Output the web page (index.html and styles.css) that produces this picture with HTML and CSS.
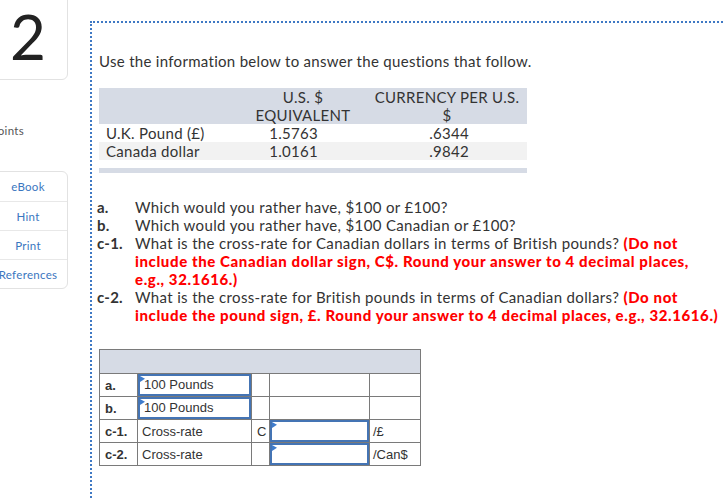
FILE: index.html
```html
<!DOCTYPE html>
<html>
<head>
<meta charset="utf-8">
<link rel="stylesheet" href="styles.css">
</head>
<body>
<div class="page">
  <aside class="side">
    <div class="numcard"><span class="num">2</span></div>
    <div class="points">points</div>
    <div class="tools">
      <div class="tool">eBook</div>
      <div class="tool">Hint</div>
      <div class="tool">Print</div>
      <div class="tool">References</div>
    </div>
  </aside>
  <main class="question">
    <p class="intro">Use the information below to answer the questions that follow.</p>
    <div class="rates">
      <div class="rh c1"></div>
      <div class="rh c2">U.S. $<br>EQUIVALENT</div>
      <div class="rh c3">CURRENCY PER U.S.<br>$</div>
      <div class="rc c1">U.K. Pound (£)</div>
      <div class="rc c2">1.5763</div>
      <div class="rc c3">.6344</div>
      <div class="rc alt c1">Canada dollar</div>
      <div class="rc alt c2">1.0161</div>
      <div class="rc alt c3">.9842</div>
    </div>
    <div class="rates-bar"></div>

    <div class="parts">
      <div class="lbl">a.</div>
      <div class="txt">Which would you rather have, $100 or £100?</div>
      <div class="lbl">b.</div>
      <div class="txt">Which would you rather have, $100 Canadian or £100?</div>
      <div class="lbl">c-1.</div>
      <div class="txt">What is the cross-rate for Canadian dollars in terms of British pounds? <b class="red">(Do not<br>include the Canadian dollar sign, C$. Round your answer to 4 decimal places,<br>e.g., 32.1616.)</b></div>
      <div class="lbl">c-2.</div>
      <div class="txt">What is the cross-rate for British pounds in terms of Canadian dollars? <b class="red">(Do not<br>include the pound sign, £. Round your answer to 4 decimal places, e.g., 32.1616.)</b></div>
    </div>

    <table class="answers">
      <colgroup>
        <col class="w1"><col class="w2"><col class="w3"><col class="w4"><col class="w5">
      </colgroup>
      <tr class="head"><td colspan="5"></td></tr>
      <tr>
        <td class="k">a.</td>
        <td class="in"><div class="box"><span class="flag"></span>100 Pounds</div></td>
        <td></td><td></td><td></td>
      </tr>
      <tr>
        <td class="k">b.</td>
        <td class="in"><div class="box"><span class="flag"></span>100 Pounds</div></td>
        <td></td><td></td><td></td>
      </tr>
      <tr>
        <td class="k">c-1.</td>
        <td>Cross-rate</td>
        <td class="cc">C</td>
        <td class="in"><div class="box"><span class="flag"></span></div></td>
        <td class="unit">/£</td>
      </tr>
      <tr>
        <td class="k">c-2.</td>
        <td>Cross-rate</td>
        <td></td>
        <td class="in"><div class="box"><span class="flag"></span></div></td>
        <td class="unit">/Can$</td>
      </tr>
    </table>
  </main>
</div>
</body>
</html>
```

FILE: styles.css
```css
* { box-sizing: border-box; }
html, body { margin: 0; padding: 0; background: #fff; }
body {
  font-family: Lato, "Open Sans", sans-serif;
  color: #333;
  overflow: hidden;
  width: 723px;
  height: 499px;
}
.page { display: flex; align-items: flex-start; height: 499px; }

.side { flex: none; width: 68px; }
.numcard {
  margin-left: -12px;
  margin-top: -10px;
  width: 80px;
  height: 90px;
  border: 1px solid #e2e2e2;
  border-radius: 6px;
  display: flex;
  align-items: center;
  justify-content: center;
}
.num {
  font-size: 62px;
  line-height: 1;
  color: #222;
  font-weight: 400;
  margin-top: 2px;
}
.points {
  margin-top: 44px;
  margin-left: -9px;
  font-size: 11.5px;
  letter-spacing: 0.3px;
  color: #555;
  line-height: 14px;
}
.tools {
  margin-top: 33px;
  margin-left: -12px;
  width: 80px;
  border: 1px solid #e2e2e2;
  border-radius: 6px;
}
.tool {
  height: 29px;
  display: flex;
  align-items: center;
  justify-content: center;
  font-size: 11.5px;
  letter-spacing: 0.3px;
  color: #3a76c0;
  border-top: 1px solid #e8e8e8;
}
.tool:first-child { border-top: 0; }

.question {
  flex: 1;
  margin-left: 22px;
  margin-top: 21px;
  height: 480px;
  border-top: 2px dotted #3f79c4;
  border-left: 2px dotted #3f79c4;
  padding: 29px 0 0 7px;
}
.intro {
  margin: 0;
  font-size: 15px;
  line-height: 18px;
  letter-spacing: 0.3px;
}

.rates {
  margin-top: 18px;
  width: 428px;
  display: grid;
  grid-template-columns: 150px 108px 170px;
  font-size: 15px;
  letter-spacing: 0.3px;
}
.rh {
  background: #d6dbe5;
  line-height: 17.5px;
  height: 36px;
  padding-top: 1px;
  text-align: center;
}
.rh.c3 { padding-left: 10px; }
.rc { line-height: 18px; height: 18px; }
.rc.alt { background: #f2f2f2; }
.rc.c1 { padding-left: 7px; }
.rc.c2 { text-align: right; padding-right: 39px; }
.rc.c3 { text-align: right; padding-right: 58px; }
.rates-bar {
  width: 428px;
  height: 5px;
  margin-top: 8px;
  background: #d6dbe5;
}

.parts {
  margin-top: 25px;
  margin-left: -2px;
  display: grid;
  grid-template-columns: 38px auto;
  font-size: 15px;
  line-height: 18px;
  letter-spacing: 0.35px;
}
.lbl { font-weight: 700; color: #333; letter-spacing: 0.2px; }
.txt { white-space: nowrap; }
.red { color: #f00; font-weight: 900; letter-spacing: 0.6px; }

.answers {
  margin-top: 25px;
  border-collapse: collapse;
  table-layout: fixed;
  width: 321px;
  font-family: "Liberation Sans", Arial, sans-serif;
  font-size: 13px;
  color: #333;
}
.w1 { width: 38px; }
.w2 { width: 114px; }
.w3 { width: 18px; }
.w4 { width: 100px; }
.w5 { width: 51px; }
.answers td {
  border: 1px solid #7a7a7a;
  height: 23px;
  padding: 0 4px;
  vertical-align: middle;
}
.answers .head td { background: #d6dbe5; height: 24px; }
.answers td.k { font-weight: 700; padding-left: 5px; }
.answers td.in { padding: 0; }
.answers td.cc { padding-left: 5px; }
.answers td.unit { padding-left: 3px; }
.box {
  position: relative;
  height: 22px;
  border: 2px solid #4474b4;
  padding-left: 4px;
  line-height: 18px;
}
.flag {
  position: absolute;
  left: 0;
  top: 0;
  width: 5px;
  height: 6px;
  background: #3f7ccc;
  clip-path: polygon(0 0, 100% 45%, 0 100%);
}
```
